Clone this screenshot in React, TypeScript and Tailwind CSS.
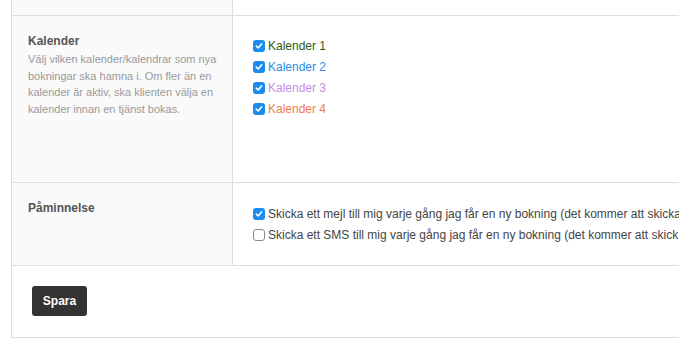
const calendars = [
  { name: "Kalender 1", color: "text-[#2f5a12]" },
  { name: "Kalender 2", color: "text-[#2b8be6]" },
  { name: "Kalender 3", color: "text-[#c58ee6]" },
  { name: "Kalender 4", color: "text-[#f07a4a]" },
];

const reminders = [
  {
    label:
      "Skicka ett mejl till mig varje gång jag får en ny bokning (det kommer att skicka",
    checked: true,
  },
  {
    label:
      "Skicka ett SMS till mig varje gång jag får en ny bokning (det kommer att skick",
    checked: false,
  },
];

function Box({ checked }: { checked: boolean }) {
  if (!checked) {
    return <span className="w-[12px] h-[12px] rounded-[3px] border border-[#8a8a8a] bg-white shrink-0" />;
  }
  return (
    <span className="w-[12px] h-[12px] rounded-[3px] bg-[#1a8cf0] shrink-0 flex items-center justify-center">
      <svg width="8" height="8" viewBox="0 0 8 8" fill="none">
        <path d="M1.3 4.2 L3.2 6 L6.7 1.8" stroke="white" strokeWidth="1.6" strokeLinecap="round" strokeLinejoin="round" />
      </svg>
    </span>
  );
}

export default function App() {
  return (
    <div className="w-[679px] h-[348px] overflow-hidden bg-white" style={{ fontFamily: '"Liberation Sans", Arial, sans-serif' }}>
      <div className="ml-[11px] w-[1000px] border-l border-b border-[#dddddd]">
        {/* tail of previous row */}
        <div className="flex h-[16px] border-b border-[#dddddd]">
          <div className="w-[221px] bg-[#fafafa] border-r border-[#dddddd]" />
          <div className="flex-1" />
        </div>

        {/* Kalender */}
        <div className="flex h-[167px] border-b border-[#dddddd]">
          <div className="w-[221px] bg-[#fafafa] border-r border-[#dddddd] px-4 pt-4">
            <div className="text-[12px] leading-[18px] font-bold text-[#555]">Kalender</div>
            <p className="mt-px text-[11px] leading-[16.5px] text-[#999] whitespace-nowrap">
              Välj vilken kalender/kalendrar som nya
              <br />
              bokningar ska hamna i. Om fler än en
              <br />
              kalender är aktiv, ska klienten välja en
              <br />
              kalender innan en tjänst bokas.
            </p>
          </div>
          <div className="flex-1 pl-5 pt-[19px]">
            {calendars.map((c) => (
              <label key={c.name} className="flex items-center gap-[3px] h-[21px] text-[12px]">
                <Box checked />
                <span className={c.color}>{c.name}</span>
              </label>
            ))}
          </div>
        </div>

        {/* Påminnelse */}
        <div className="flex h-[83px] border-b border-[#dddddd]">
          <div className="w-[221px] bg-[#fafafa] border-r border-[#dddddd] px-4 pt-4">
            <div className="text-[12px] leading-[18px] font-bold text-[#555]">Påminnelse</div>
          </div>
          <div className="flex-1 pl-5 pt-[20px]">
            {reminders.map((r, i) => (
              <label key={i} className="flex items-center gap-[3px] h-[21px] text-[12px] text-[#444] whitespace-nowrap">
                <Box checked={r.checked} />
                <span>{r.label}</span>
              </label>
            ))}
          </div>
        </div>

        {/* footer */}
        <div className="h-[71px] pl-5 pt-5">
          <button className="h-[30px] w-[55px] rounded-[3px] bg-[#333] text-white text-[12px] font-bold">
            Spara
          </button>
        </div>
      </div>
    </div>
  );
}
